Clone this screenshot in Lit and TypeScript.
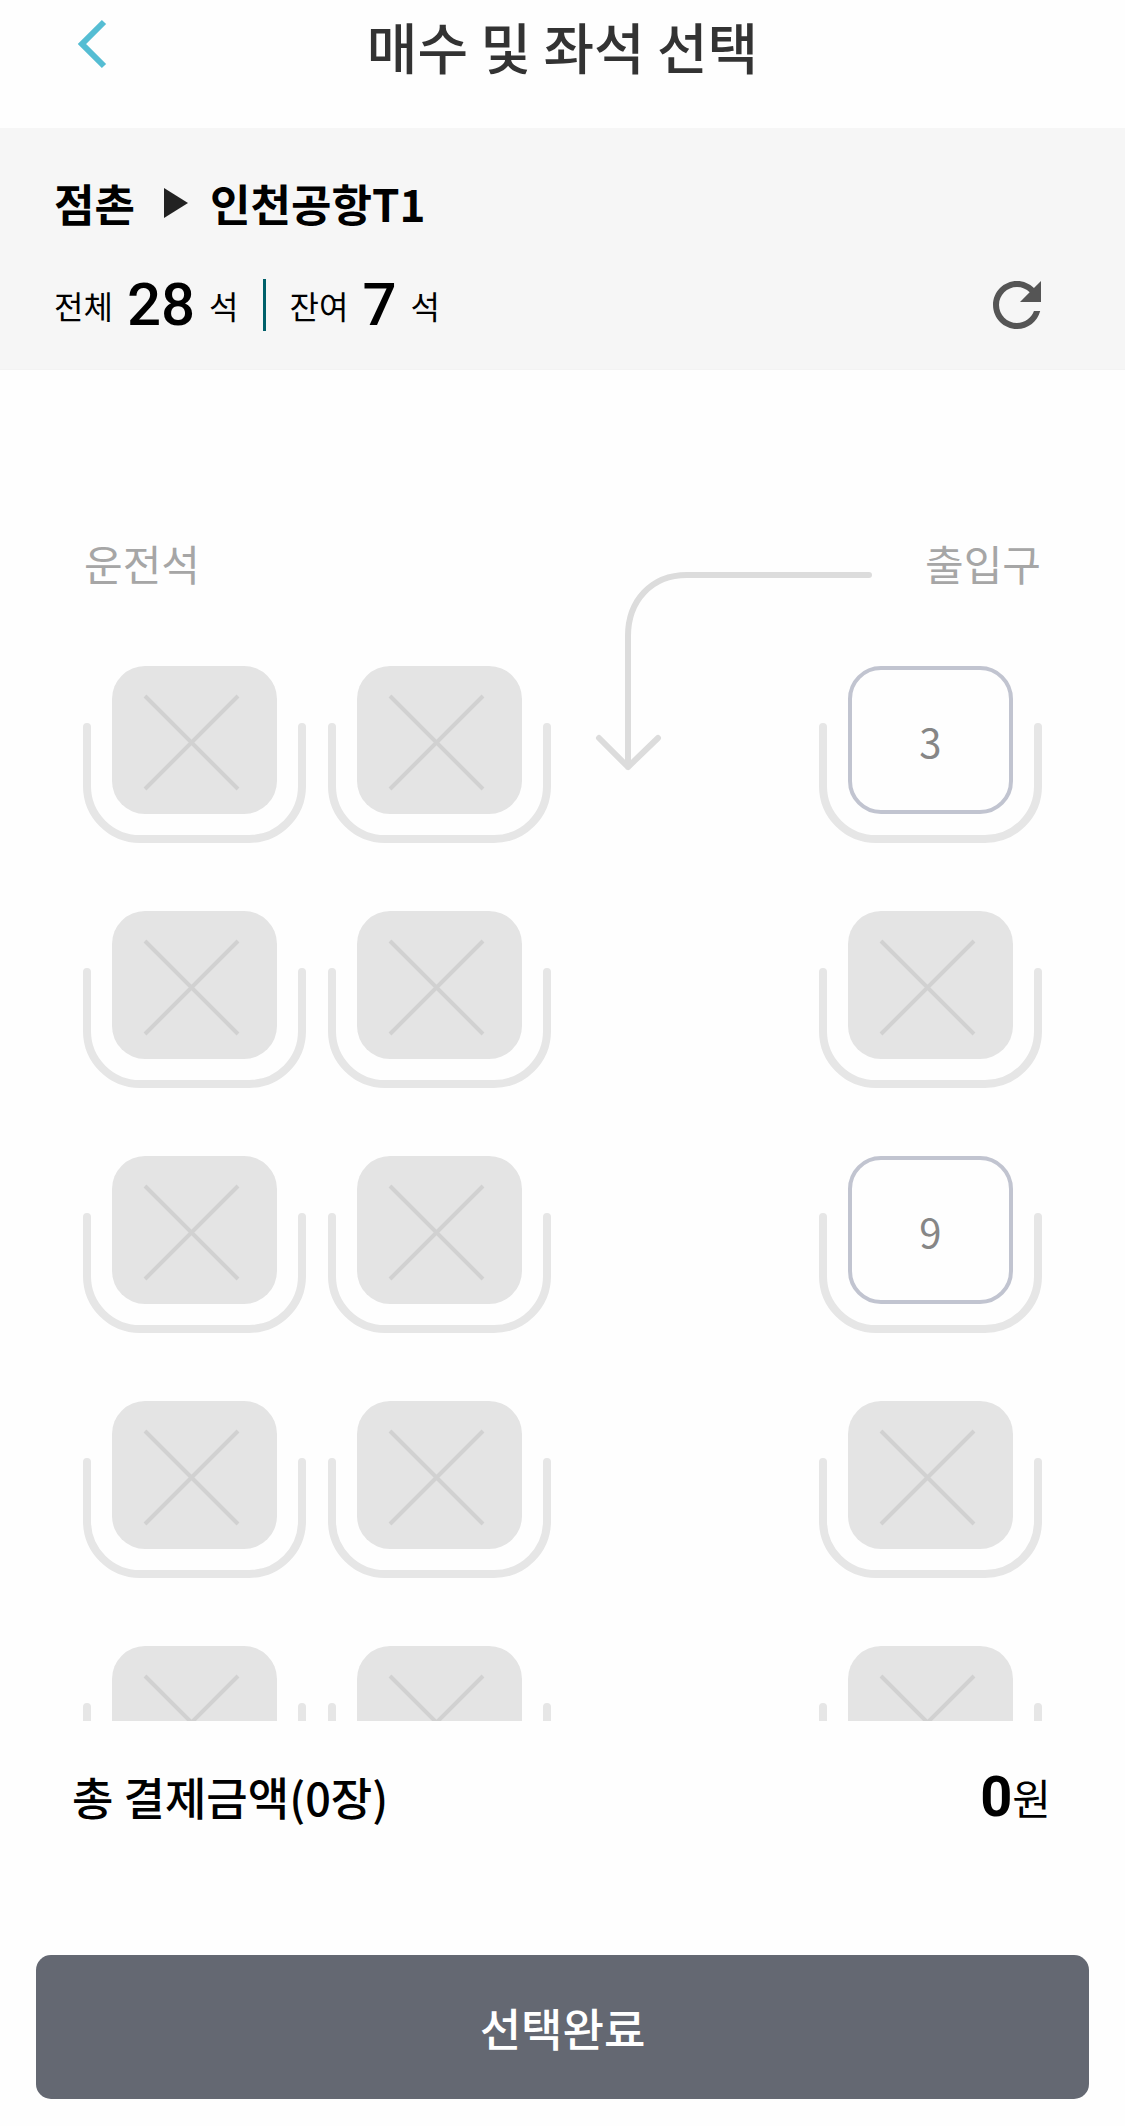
import { LitElement, html, css, svg } from "lit";
import { customElement, property, state } from "lit/decorators.js";

@customElement("bus-seat")
export class BusSeat extends LitElement {
  @property({ type: Number }) number = 0;
  @property({ type: Boolean }) taken = false;

  static styles = css`
    :host {
      display: block;
    }
    .seat {
      display: grid;
      width: 223px;
      max-width: 100%;
      padding: 0;
      border: 0;
      background: none;
      font: inherit;
      cursor: pointer;
    }
    .seat:disabled {
      cursor: default;
    }
    .shape,
    .number {
      grid-area: 1 / 1;
    }
    .shape {
      display: block;
      width: 100%;
    }
    .number {
      color: #868686;
      font-size: 40px;
      line-height: 150px;
    }
    .back {
      fill: none;
      stroke: #e6e6e6;
      stroke-width: 8;
      stroke-linecap: round;
    }
    .cushion-taken {
      fill: #e4e4e4;
    }
    .cushion-free {
      fill: #fefefe;
      stroke: #c1c4d0;
      stroke-width: 4;
    }
    .cross {
      fill: none;
      stroke: #d1d1d1;
      stroke-width: 4;
    }
  `;

  render() {
    return html`
      <button
        class="seat"
        type="button"
        ?disabled=${this.taken}
        aria-label=${this.number}
      >
        <svg class="shape" viewBox="0 0 223 177" aria-hidden="true">
          <path
            class="back"
            d="M4 61V120A53 53 0 0 0 57 173H166A53 53 0 0 0 219 120V61"
          />
          ${this.taken
            ? svg`<rect class="cushion-taken" x="29" y="0" width="165" height="148" rx="33" />
                <path class="cross" d="M62 30L155 123M155 30L62 123" />`
            : svg`<rect class="cushion-free" x="31" y="2" width="161" height="144" rx="31" />`}
        </svg>
        ${this.taken ? null : html`<span class="number">${this.number}</span>`}
      </button>
    `;
  }
}

@customElement("app-root")
export class AppRoot extends LitElement {
  @state() private total = 28;
  @state() private free = [3, 9];
  @state() private remaining = 7;
  @state() private rows = 5;

  static styles = css`
    :host {
      display: flex;
      flex-direction: column;
      height: 100vh;
      background: #fefefe;
      color: #000;
      font-family: "Noto Sans CJK KR", "Noto Sans", sans-serif;
    }
    button {
      font-family: inherit;
      cursor: pointer;
    }
    .header {
      display: grid;
      grid-template-columns: 1fr auto 1fr;
      align-items: center;
      padding: 0 72px 38px;
    }
    .title {
      margin: 0;
      color: #333;
      font-size: 55px;
      font-weight: 500;
      line-height: 90px;
    }
    .icon-button {
      display: flex;
      padding: 0;
      border: 0;
      background: none;
    }
    .back-icon {
      width: 40px;
      height: 52px;
      fill: none;
      stroke: #55bdd3;
      stroke-width: 6;
    }
    .trip {
      padding: 45px 72px 34px 54px;
      border-bottom: 1px solid #f3f3f3;
      background: #f6f6f6;
    }
    .route {
      display: flex;
      align-items: center;
      margin: 0 0 42px;
      font-size: 44px;
      font-weight: 700;
      line-height: 60px;
    }
    .route-arrow {
      width: 24px;
      height: 30px;
      margin: 0 22px 0 29px;
      fill: #222;
    }
    .counts {
      display: flex;
      align-items: center;
      gap: 14px;
      height: 60px;
      font-size: 32px;
    }
    .count {
      font-family: Roboto, sans-serif;
      font-size: 60px;
      font-weight: 500;
      line-height: 60px;
    }
    .divider {
      width: 3px;
      height: 52px;
      margin: 0 10px;
      background: #00606a;
    }
    .refresh {
      margin-left: auto;
    }
    .refresh-icon {
      width: 72px;
      height: 72px;
      fill: #555;
    }
    .map {
      flex: 1;
      min-height: 0;
      padding: 162px 72px 0;
      box-sizing: border-box;
      overflow: hidden;
    }
    .front,
    .row {
      display: grid;
      grid-template-columns: repeat(4, 1fr);
    }
    .front {
      height: 134px;
    }
    .row {
      height: 245px;
    }
    .label {
      grid-row: 1;
      padding: 0 12px;
      color: #a6a6a6;
      font-size: 42px;
      line-height: 62px;
    }
    .label-door {
      grid-column: 4;
      text-align: right;
    }
    .entry-path {
      grid-column: 3 / 5;
      grid-row: 1;
      width: 279px;
      height: 199px;
      margin: 40px 0 0 32px;
      fill: none;
      stroke: #dcdcdc;
      stroke-width: 6;
      stroke-linecap: round;
      stroke-linejoin: round;
    }
    .place {
      grid-row: 1;
      justify-self: center;
    }
    .place-left {
      grid-column: 1;
    }
    .place-middle {
      grid-column: 2;
    }
    .place-right {
      grid-column: 4;
    }
    .footer {
      padding: 46px 36px 27px;
    }
    .total {
      display: flex;
      align-items: center;
      justify-content: space-between;
      margin: 0 38px 128px 36px;
      font-size: 45px;
      font-weight: 500;
      line-height: 60px;
    }
    .price {
      display: flex;
      align-items: center;
      font-size: 42px;
      font-weight: 400;
    }
    .amount {
      font-family: Roboto, sans-serif;
      font-size: 56px;
      font-weight: 700;
    }
    .submit {
      display: block;
      width: 100%;
      height: 144px;
      border: 0;
      border-radius: 15px;
      background: #646872;
      color: #fff;
      font-size: 45px;
      font-weight: 500;
    }
  `;

  private renderRow(row: number) {
    return html`<div class="row">
      ${["left", "middle", "right"].map((side, i) => {
        const number = row * 3 + i + 1;
        return html`<bus-seat
          class="place place-${side}"
          .number=${number}
          .taken=${!this.free.includes(number)}
        ></bus-seat>`;
      })}
    </div>`;
  }

  render() {
    return html`
      <header class="header">
        <button class="icon-button" type="button" aria-label="back">
          <svg class="back-icon" viewBox="0 0 40 52" aria-hidden="true">
            <path d="M32 3L10 25L32 47" />
          </svg>
        </button>
        <h1 class="title">매수 및 좌석 선택</h1>
      </header>

      <section class="trip">
        <h2 class="route">
          <span>점촌</span>
          <svg class="route-arrow" viewBox="0 0 24 30" aria-hidden="true">
            <path d="M0 0L24 15L0 30Z" />
          </svg>
          <span>인천공항T1</span>
        </h2>
        <div class="counts">
          <span>전체</span>
          <span class="count">${this.total}</span>
          <span>석</span>
          <span class="divider"></span>
          <span>잔여</span>
          <span class="count">${this.remaining}</span>
          <span>석</span>
          <button class="icon-button refresh" type="button" aria-label="refresh">
            <svg class="refresh-icon" viewBox="0 0 24 24" aria-hidden="true">
              <path
                d="M17.65 6.35C16.2 4.9 14.21 4 12 4c-4.42 0-7.99 3.58-7.99 8s3.57 8 7.99 8c3.73 0 6.84-2.55 7.73-6h-2.08c-.82 2.33-3.04 4-5.65 4-3.31 0-6-2.69-6-6s2.69-6 6-6c1.66 0 3.14.69 4.22 1.78L13 11h7V4l-2.35 2.35z"
              />
            </svg>
          </button>
        </div>
      </section>

      <main class="map">
        <div class="front">
          <span class="label">운전석</span>
          <span class="label label-door">출입구</span>
          <svg class="entry-path" viewBox="0 0 279 199" aria-hidden="true">
            <path d="M274 3H92C56 3 33 29 33 64V195M4 166L33 195L63 166" />
          </svg>
        </div>
        ${Array.from({ length: this.rows }, (_, row) => this.renderRow(row))}
      </main>

      <footer class="footer">
        <div class="total">
          <span>총 결제금액(0장)</span>
          <span class="price"><span class="amount">0</span>원</span>
        </div>
        <button class="submit" type="button">선택완료</button>
      </footer>
    `;
  }
}
